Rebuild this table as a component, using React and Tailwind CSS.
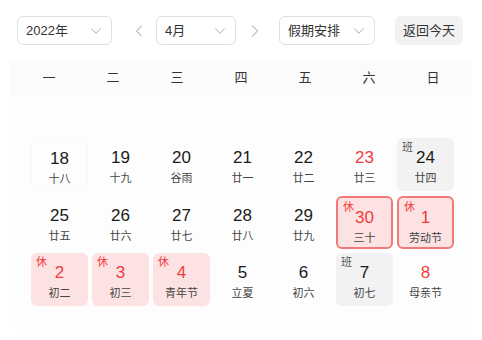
import React from 'react';
import { ChevronDown, ChevronLeft, ChevronRight } from 'lucide-react';

const weekDays = ['一', '二', '三', '四', '五', '六', '日'];

// type: rest = 休 pink, restB = 休 pink with red border, work = 班 gray
const rows = [
  [
    { d: 18, l: '十八', today: true },
    { d: 19, l: '十九' },
    { d: 20, l: '谷雨' },
    { d: 21, l: '廿一' },
    { d: 22, l: '廿二' },
    { d: 23, l: '廿三', red: true },
    { d: 24, l: '廿四', type: 'work' },
  ],
  [
    { d: 25, l: '廿五' },
    { d: 26, l: '廿六' },
    { d: 27, l: '廿七' },
    { d: 28, l: '廿八' },
    { d: 29, l: '廿九' },
    { d: 30, l: '三十', red: true, type: 'restB' },
    { d: 1, l: '劳动节', red: true, type: 'restB' },
  ],
  [
    { d: 2, l: '初二', red: true, type: 'rest' },
    { d: 3, l: '初三', red: true, type: 'rest' },
    { d: 4, l: '青年节', red: true, type: 'rest' },
    { d: 5, l: '立夏' },
    { d: 6, l: '初六' },
    { d: 7, l: '初七', type: 'work' },
    { d: 8, l: '母亲节', red: true },
  ],
];

function Select({ label, width }) {
  return (
    <div
      className={`${width} h-[29px] flex items-center justify-between pl-2 pr-[6px] border border-[#dcdfe6] rounded-[6px] bg-white text-[13px] text-[#333]`}
    >
      <span>{label}</span>
      <ChevronDown size={18} strokeWidth={1.2} className="text-[#a0a3a8]" />
    </div>
  );
}

function DayCell({ cell }) {
  let box = '';
  if (cell.type === 'rest') box = 'bg-[#fde2e3]';
  if (cell.type === 'restB') box = 'bg-[#fde2e3] border-2 border-[#ef7a7a]';
  if (cell.type === 'work') box = 'bg-[#f2f2f2]';
  if (cell.today) box = 'border border-[#fcfaee]';
  const tag = cell.type === 'work' ? '班' : cell.type ? '休' : null;
  return (
    <div className={`relative h-[53px] rounded-[6px] flex flex-col items-center ${box}`}>
      {tag && (
        <span
          className={`absolute left-[5px] top-[4px] text-[11px] leading-none ${
            tag === '班' ? 'text-[#555]' : 'text-[#f23b3b]'
          }`}
        >
          {tag}
        </span>
      )}
      <span
        className={`mt-[10px] text-[17px] leading-[20px] ${cell.red ? 'text-[#f23b3b]' : 'text-[#1a1a1a]'}`}
      >
        {cell.d}
      </span>
      <span className="mt-[3px] text-[11px] leading-[14px] text-[#444]">{cell.l}</span>
    </div>
  );
}

export default function App() {
  return (
    <div
      className="w-[482px] h-[340px] bg-white relative"
      style={{ fontFamily: '"Liberation Sans", "Noto Sans CJK SC", sans-serif' }}
    >
      <div className="flex items-center pt-4 pl-[17px]">
        <Select label="2022年" width="w-[95px]" />
        <ChevronLeft size={20} strokeWidth={1.2} className="ml-[17px] text-[#999]" />
        <div className="ml-[7px]">
          <Select label="4月" width="w-[80px]" />
        </div>
        <ChevronRight size={20} strokeWidth={1.2} className="ml-[9px] text-[#999]" />
        <div className="ml-[14px]">
          <Select label="假期安排" width="w-[96px]" />
        </div>
        <button className="ml-[20px] w-[68px] h-[29px] rounded-[6px] bg-[#f2f2f2] text-[13px] text-[#333]">
          返回今天
        </button>
      </div>

      <div className="mx-[10px] mt-[15px] h-[270px] bg-[#fdfdfd]">
        <div className="h-[35px] bg-[#fbfbfb] flex items-center">
          <div className="grid grid-cols-7 w-[448px] ml-[7px]">
            {weekDays.map((w) => (
              <div key={w} className="text-center text-[13px] text-[#333]">
                {w}
              </div>
            ))}
          </div>
        </div>
        <div className="mt-[43px] ml-[21px] w-[423px] grid grid-cols-7 gap-x-[4px] gap-y-[4.5px]">
          {rows.flat().map((c, i) => (
            <DayCell key={i} cell={c} />
          ))}
        </div>
      </div>
    </div>
  );
}
